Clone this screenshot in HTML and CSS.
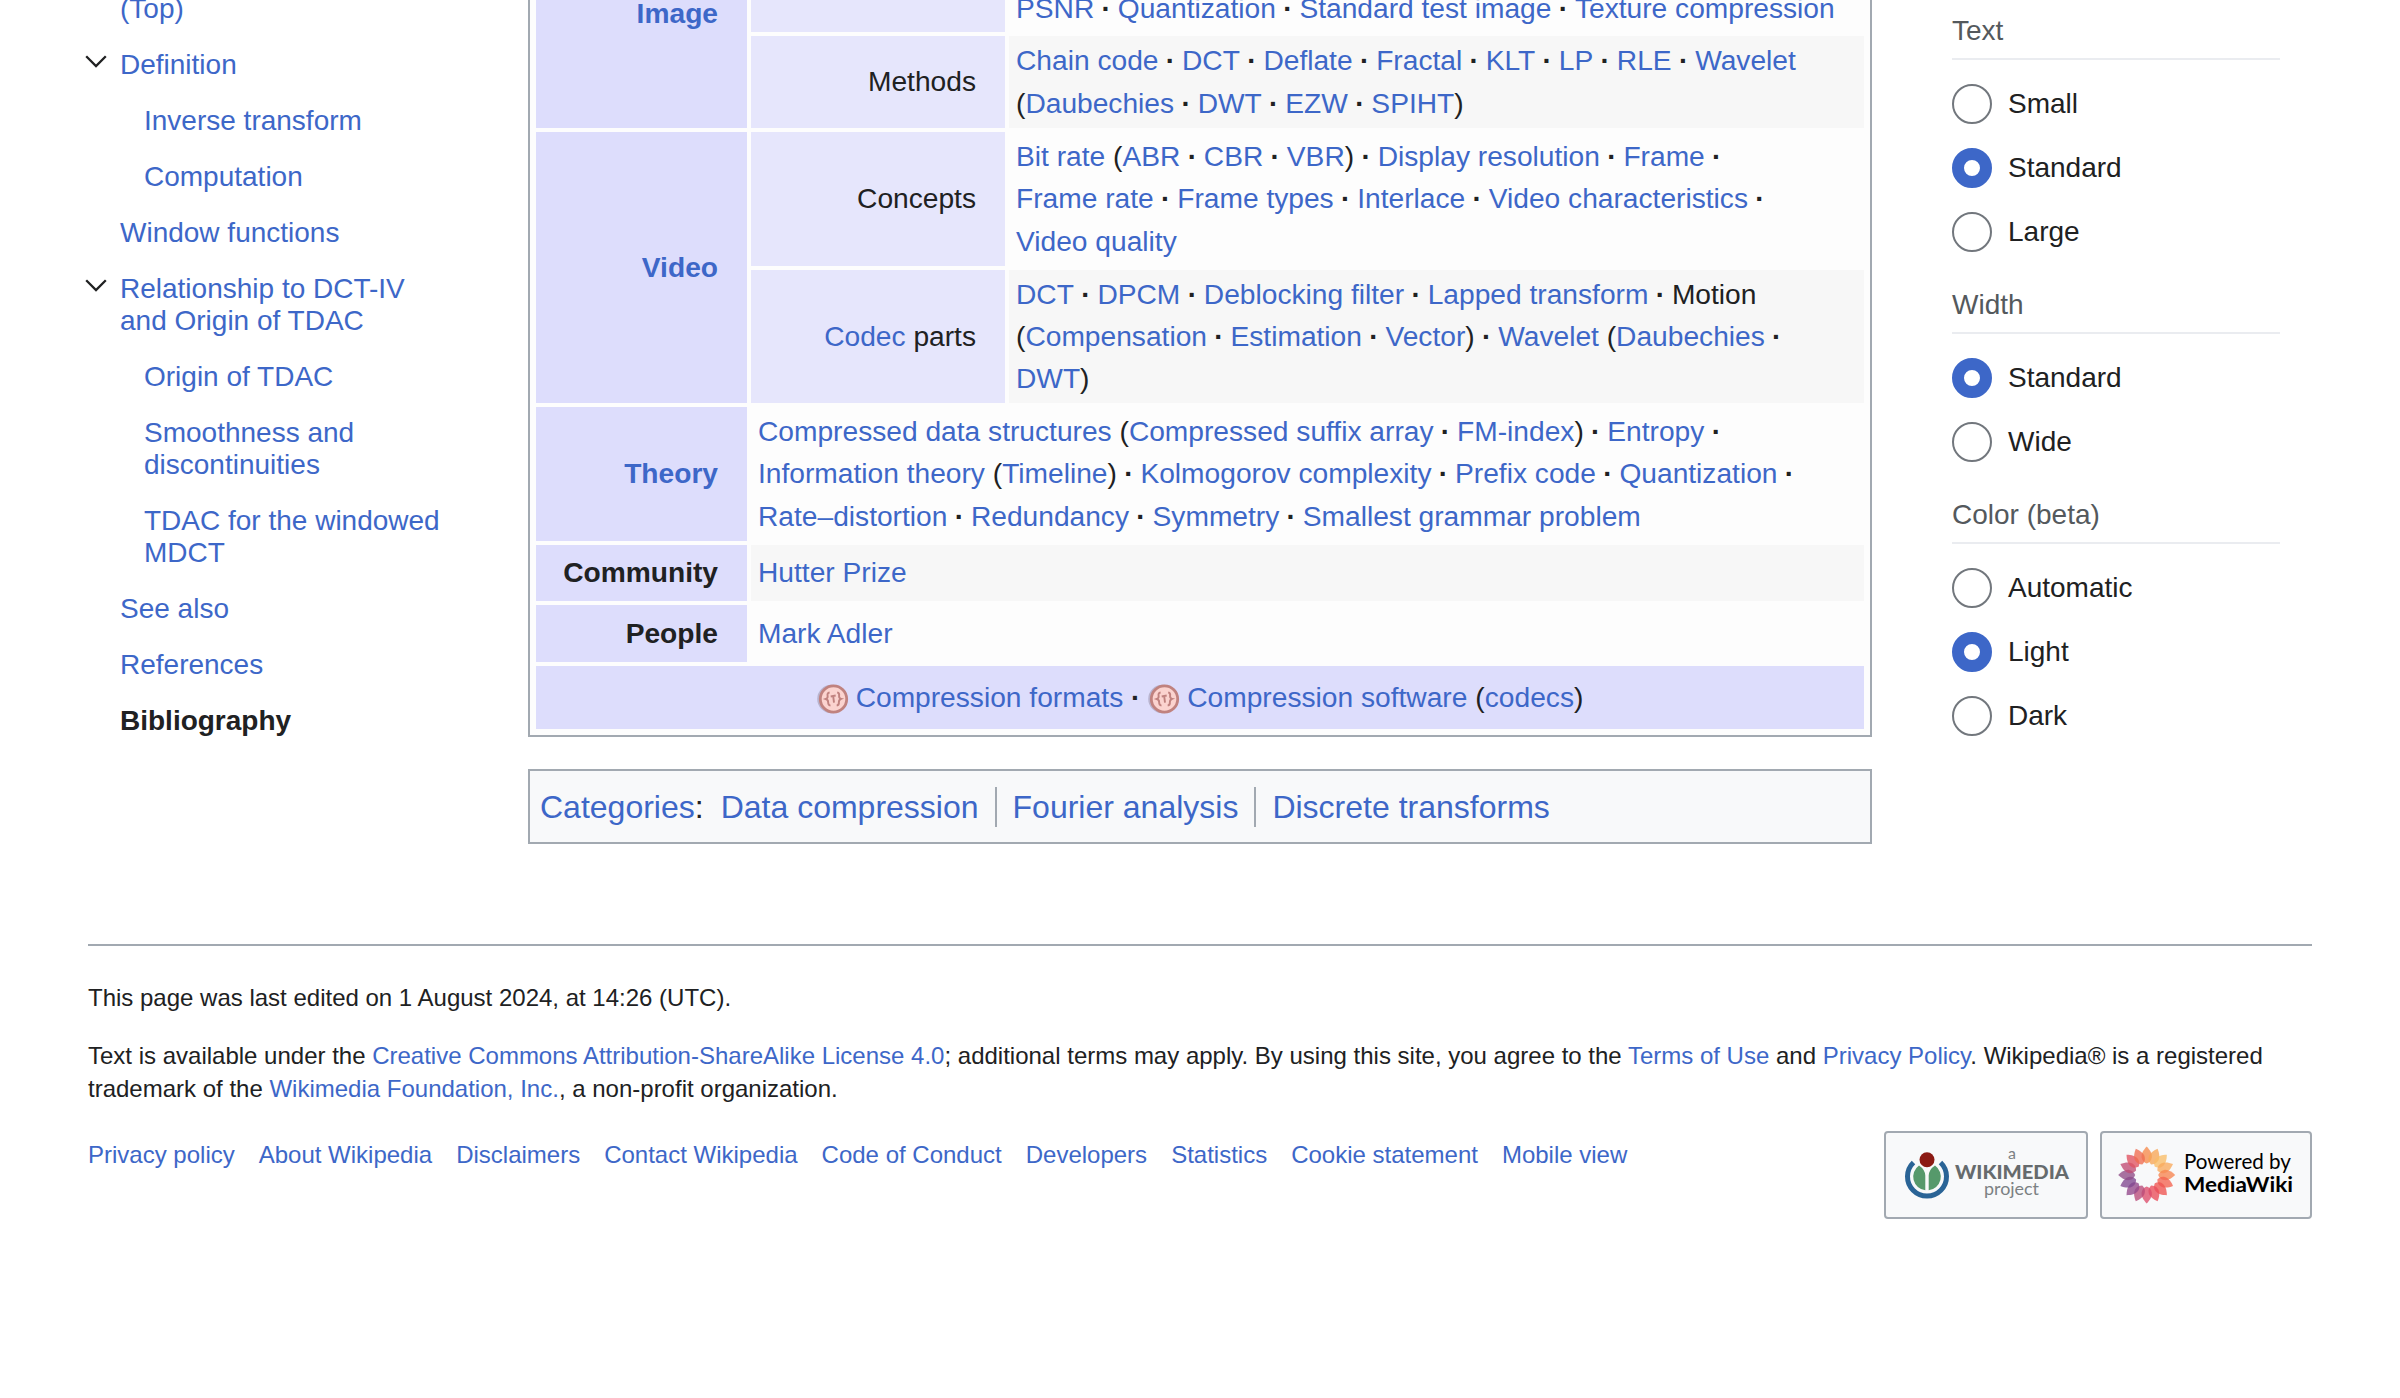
FILE: index.html
```
<!DOCTYPE html>
<html lang="en">
<head>
<meta charset="utf-8">
<title>Modified discrete cosine transform - Wikipedia</title>
<link rel="stylesheet" href="styles.css">
</head>
<body>
<svg class="defs" width="0" height="0" aria-hidden="true">
  <symbol id="chevron" viewBox="0 0 22 13"><path d="M1.2 1.2 11 11 20.8 1.2" fill="none" stroke="#202122" stroke-width="2.3"/></symbol>
  <symbol id="category" viewBox="0 0 32 32">
    <circle cx="14.5" cy="16" r="14.3" fill="#b9b4cf"/>
    <circle cx="16.5" cy="16" r="13.2" fill="#fbd3cf" stroke="#c0827f" stroke-width="2.8"/>
    <path d="M12.6 9.500q-2.600.4-2 3.500.4 2.300-1.800 3 2.400.8 2.300 3 0 3.300 2.400 3.600M20.200 9.300q2.500.6 1.900 3.500-.3 2.400 2 3-2.300.9-2.200 3.200.3 3.100-2.200 3.700M13.700 13.500l5-1M16.200 13.200l.8 6.500" fill="none" stroke="#c0827f" stroke-width="1.9"/>
  </symbol>
</svg>
<div class="page">
  <nav class="toc">
    <ul>
      <li><a>(Top)</a></li>
      <li class="open"><svg class="chev"><use href="#chevron"/></svg><a>Definition</a></li>
      <li class="sub"><a>Inverse transform</a></li>
      <li class="sub"><a>Computation</a></li>
      <li><a>Window functions</a></li>
      <li class="open"><svg class="chev"><use href="#chevron"/></svg><a>Relationship to DCT-IV<br>and Origin of TDAC</a></li>
      <li class="sub"><a>Origin of TDAC</a></li>
      <li class="sub"><a>Smoothness and<br>discontinuities</a></li>
      <li class="sub"><a>TDAC for the windowed<br>MDCT</a></li>
      <li><a>See also</a></li>
      <li><a>References</a></li>
      <li class="active">Bibliography</li>
    </ul>
  </nav>
  <main>
    <div class="navbox">
      <div class="group image"><a>Image</a></div>
      <div class="subgroup image-top"></div>
      <div class="list image-top"><p><a>PSNR</a><b> · </b><a>Quantization</a><b> · </b><a>Standard test image</a><b> · </b><a>Texture compression</a></p></div>
      <div class="subgroup">Methods</div>
      <div class="list even"><p><a>Chain code</a><b> · </b><a>DCT</a><b> · </b><a>Deflate</a><b> · </b><a>Fractal</a><b> · </b><a>KLT</a><b> · </b><a>LP</a><b> · </b><a>RLE</a><b> · </b><a>Wavelet</a></p><p>(<a>Daubechies</a><b> · </b><a>DWT</a><b> · </b><a>EZW</a><b> · </b><a>SPIHT</a>)</p></div>
      <div class="group video"><a>Video</a></div>
      <div class="subgroup">Concepts</div>
      <div class="list"><p><a>Bit rate</a> (<a>ABR</a><b> · </b><a>CBR</a><b> · </b><a>VBR</a>)<b> · </b><a>Display resolution</a><b> · </b><a>Frame</a><b> · </b></p><p><a>Frame rate</a><b> · </b><a>Frame types</a><b> · </b><a>Interlace</a><b> · </b><a>Video characteristics</a><b> · </b></p><p><a>Video quality</a></p></div>
      <div class="subgroup"><span><a>Codec</a> parts</span></div>
      <div class="list even"><p><a>DCT</a><b> · </b><a>DPCM</a><b> · </b><a>Deblocking filter</a><b> · </b><a>Lapped transform</a><b> · </b>Motion</p><p>(<a>Compensation</a><b> · </b><a>Estimation</a><b> · </b><a>Vector</a>)<b> · </b><a>Wavelet</a> (<a>Daubechies</a><b> · </b></p><p><a>DWT</a>)</p></div>
      <div class="group"><a>Theory</a></div>
      <div class="list wide"><p><a>Compressed data structures</a> (<a>Compressed suffix array</a><b> · </b><a>FM-index</a>)<b> · </b><a>Entropy</a><b> · </b></p><p><a>Information theory</a> (<a>Timeline</a>)<b> · </b><a>Kolmogorov complexity</a><b> · </b><a>Prefix code</a><b> · </b><a>Quantization</a><b> · </b></p><p><a>Rate–distortion</a><b> · </b><a>Redundancy</a><b> · </b><a>Symmetry</a><b> · </b><a>Smallest grammar problem</a></p></div>
      <div class="group">Community</div>
      <div class="list wide even"><p><a>Hutter Prize</a></p></div>
      <div class="group">People</div>
      <div class="list wide"><p><a>Mark Adler</a></p></div>
      <div class="below"><svg class="cat"><use href="#category"/></svg><a>Compression formats</a><b> · </b><svg class="cat"><use href="#category"/></svg><a>Compression software</a><span class="tail">(<a>codecs</a>)</span></div>
    </div>
    <div class="catlinks"><span><a>Categories</a>:</span>
      <ul><li><a>Data compression</a></li><li><a>Fourier analysis</a></li><li><a>Discrete transforms</a></li></ul>
    </div>
  </main>
  <aside class="appearance">
    <section><h3>Text</h3><label><i></i>Small</label><label><i class="on"></i>Standard</label><label><i></i>Large</label></section>
    <section><h3>Width</h3><label><i class="on"></i>Standard</label><label><i></i>Wide</label></section>
    <section><h3>Color (beta)</h3><label><i></i>Automatic</label><label><i class="on"></i>Light</label><label><i></i>Dark</label></section>
  </aside>
</div>
<footer>
  <p>This page was last edited on 1 August 2024, at 14:26 (UTC).</p>
  <p>Text is available under the <a>Creative Commons Attribution-ShareAlike License 4.0</a>; additional terms may apply. By using this site, you agree to the <a>Terms of Use</a> and <a>Privacy Policy</a>. Wikipedia® is a registered<br>trademark of the <a>Wikimedia Foundation, Inc.</a>, a non-profit organization.</p>
  <div class="bottom">
    <ul class="places"><li><a>Privacy policy</a></li><li><a>About Wikipedia</a></li><li><a>Disclaimers</a></li><li><a>Contact Wikipedia</a></li><li><a>Code of Conduct</a></li><li><a>Developers</a></li><li><a>Statistics</a></li><li><a>Cookie statement</a></li><li><a>Mobile view</a></li></ul>
    <div class="badges">
      <div class="badge">
        <svg width="200" height="84" viewBox="0 0 200 84">
          <path d="M27.500 29.500A19.500 19.500 0 1 0 54.500 29.500" fill="none" stroke="#2a6496" stroke-width="5"/>
          <path d="M33 32.500A13.700 13.700 0 0 0 39.300 57.300V42.500Q39 36.500 33 32.500ZM49 32.500A13.700 13.700 0 0 1 42.700 57.300V42.500Q43 36.500 49 32.500Z" fill="#56996b"/>
          <circle cx="41" cy="26.700" r="7.500" fill="#8b1a13"/>
          <g font-family="Lato, sans-serif" fill="#7c8183"><text x="122" y="26.300" font-size="16">a</text>
          <text x="69" y="45.700" font-size="18.500" font-weight="900" fill="#666b6d" textLength="114" lengthAdjust="spacingAndGlyphs">WIKIMEDIA</text>
          <text x="98" y="62.300" font-size="17.500" textLength="55" lengthAdjust="spacingAndGlyphs">project</text></g>
        </svg>
      </div>
      <div class="badge">
        <svg width="208" height="84" viewBox="0 0 208 84">
          <g class="flower"></g>
          <text x="82" y="36.300" font-family="Lato, sans-serif" font-size="20.500" textLength="107" lengthAdjust="spacingAndGlyphs">Powered by</text>
          <text x="82" y="59.300" font-family="Lato, sans-serif" font-weight="700" font-size="21.500" textLength="109" lengthAdjust="spacingAndGlyphs">MediaWiki</text>
        </svg>
      </div>
    </div>
  </div>
</footer>
<script src="flower.js"></script>
</body>
</html>
```

FILE: flower.js
```
// Sixteen overlapping petals, coloured by their position in the ring.
const ring = document.querySelector('.flower');
const stops = ['#f68a4c','#f7a556','#f9bd66','#f8a95b','#f68450','#f36350','#ee5350','#e94b59','#dc4c6a','#b84a79','#92488a','#7f4890','#8f4c87','#c04c73','#e05260','#f06c50'];
stops.forEach((color, i) => {
  const petal = document.createElementNS('http://www.w3.org/2000/svg', 'path');
  petal.setAttribute('d', 'M44.700 13.500C48 17 50.300 20.500 49.800 24.500C49.300 28 47 29.500 44.700 30.500C42.400 29.500 40.100 28 39.600 24.500C39.100 20.500 41.400 17 44.700 13.500Z');
  petal.setAttribute('fill', color);
  petal.setAttribute('fill-opacity', '.78');
  petal.setAttribute('transform', `rotate(${i * 22.5} 44.700 42)`);
  ring.append(petal);
});
```

FILE: styles.css
```
* { box-sizing: border-box; }
body { margin: 0; height: 1398px; overflow: hidden; background: #fff; color: #202122; font-family: "Liberation Sans", Arial, sans-serif; }
a { color: #3d67c8; text-decoration: none; }
ul { list-style: none; margin: 0; padding: 0; }
p { margin: 0; }
.defs { display: none; }
.page { display: grid; grid-template-columns: 440px 1344px 408px; height: 944px; padding-left: 88px; overflow: hidden; }
.toc { margin-top: -19px; font-size: 28px; line-height: 32px; }
.toc li { display: flex; padding: 12px 0 12px 32px; white-space: nowrap; }
.toc .sub { padding-left: 56px; }
.toc .open { padding-left: 0; }
.chev { width: 22px; height: 13px; margin: 6px 13px 0 -3px; }
.toc .active { font-weight: 700; }

.navbox { display: grid; grid-template-columns: 211px 254px 855px; grid-template-rows: 32px 92px 134px 133px 134px 56px 57px 63px; gap: 4px; height: 737px; padding: 0 6px 6px; border: 2px solid #a2a9b1; border-top: 0; background: #fdfdfd; font-size: 28.16px; line-height: 42.24px; white-space: pre; }
.group, .subgroup { display: flex; align-items: center; justify-content: flex-end; padding: 1px 29px 0 0; }
.group { background: #ddddfc; font-weight: 700; }
.subgroup { background: #e6e6fc; }
.image, .video { grid-row: span 2; }
.group.image { align-items: flex-start; padding-top: 0; line-height: 28px; }
.list { display: flex; flex-direction: column; justify-content: center; padding: 1px 0 0 7px; }
.list b { letter-spacing: -.5px; }
.even { background: #f7f7f7; }
.wide { grid-column: span 2; }
.list.image-top { justify-content: flex-end; padding: 0 0 2px 7px; overflow: hidden; }
.below { grid-column: span 3; display: flex; justify-content: center; align-items: center; padding-top: 1px; background: #ddddfc; }
.cat { width: 32px; height: 32px; margin: 2px 7px 0 0; }
.tail { margin-left: 8px; }

.catlinks { display: flex; align-items: center; height: 75px; margin-top: 32px; padding-left: 10px; border: 2px solid #a2a9b1; background: #f8f9fa; font-size: 32px; line-height: 40px; }
.catlinks ul { display: flex; margin-left: 1px; }
.catlinks li { padding: 0 16px; border-left: 2px solid #a2a9b1; }
.catlinks li:first-child { border: 0; }

.appearance { margin-left: 80px; width: 328px; font-size: 28px; }
.appearance h3 { margin: 0; height: 82px; padding-top: 32px; line-height: 42px; font-size: 28px; font-weight: 400; color: #54595d; border-bottom: 2px solid #eaecf0; }
.appearance section:first-child h3 { height: 60px; padding-top: 10px; }
.appearance label { display: flex; align-items: center; gap: 16px; height: 40px; margin-top: 24px; line-height: 34px; }
.appearance i { width: 40px; height: 40px; border: 2px solid #72777d; border-radius: 50%; }
.appearance .on { border: 12px solid #3d67c8; }

footer { margin: 0 88px; padding-top: 35px; border-top: 2px solid #a2a9b1; font-size: 24px; line-height: 33.6px; white-space: nowrap; }
footer p { margin-bottom: 24px; }
.bottom { display: flex; justify-content: space-between; align-items: flex-start; margin-top: -24px; padding-top: 25px; }
.places { display: flex; gap: 24px; padding-top: 7px; }
.badges { display: flex; gap: 12px; }
.badge { border: 2px solid #a2a9b1; border-radius: 4px; background: #f8f9fa; height: 88px; }
.badge svg { display: block; }
```
